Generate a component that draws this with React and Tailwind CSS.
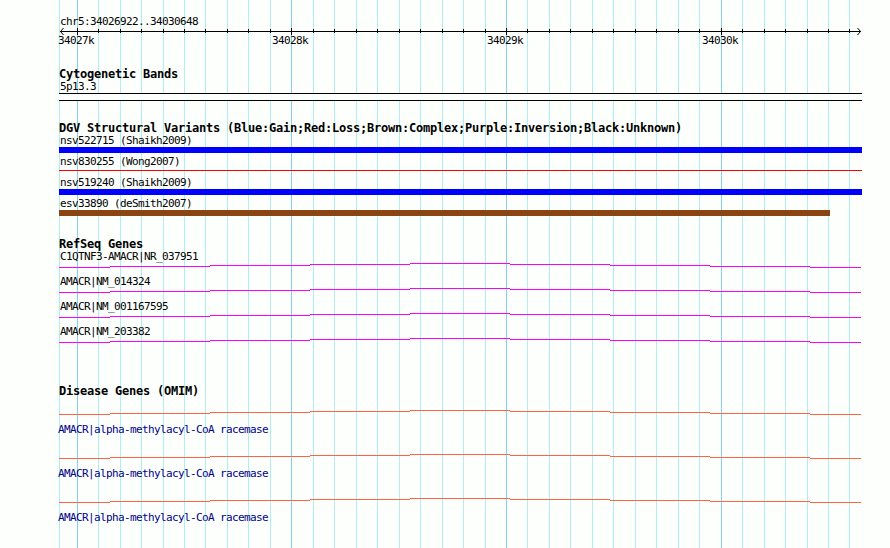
import React from 'react'
import clsx from 'clsx'

// x of every 100bp line inside the 803px wide track area
const GRID = Array.from({ length: 37 }, (_, i) => ({
  x: Math.floor(18.2 + i * 21.465),
  major: i % 10 === 0,
}))

const TICK_LABELS = ['34027k', '34028k', '34029k', '34030k']

const VARIANTS = [
  { name: 'nsv522715 (Shaikh2009)', bar: 'h-[6px] w-full bg-[#0000ff]' },
  { name: 'nsv830255 (Wong2007)', bar: 'h-px w-full mt-[2px] bg-[#ff0000]' },
  { name: 'nsv519240 (Shaikh2009)', bar: 'h-[6px] w-full bg-[#0000ff]' },
  { name: 'esv33890 (deSmith2007)', bar: 'h-[6px] w-[771px] bg-[#8b4513]' },
]

const REFSEQ = ['C1QTNF3-AMACR|NR_037951', 'AMACR|NM_014324', 'AMACR|NM_001167595', 'AMACR|NM_203382']

const OMIM = [1, 2, 3]

// intron hat: [start, width, y]
const HAT = [
  [0, 51, 4],
  [51, 100, 3],
  [151, 100, 2],
  [251, 100, 1],
  [351, 100, 0],
  [451, 100, 1],
  [551, 100, 2],
  [651, 100, 3],
  [751, 51, 4],
]

const Hat = ({ className }) => (
  <svg width="803" height="5" className={clsx('block', className)} shapeRendering="crispEdges">
    {HAT.map(([x, w, y]) => (
      <rect key={x} x={x} y={y} width={w} height="1" fill="currentColor" />
    ))}
  </svg>
)

const Title = ({ children }) => (
  <h2 className="h-3 text-[12px] leading-[13px] font-bold tracking-[-0.224px] whitespace-pre">{children}</h2>
)

const Label = ({ children, className = 'pl-px leading-[14px]' }) => (
  <div className={clsx('h-3 text-[11px] tracking-[-0.622px] whitespace-pre', className)}>{children}</div>
)

const Grid = () => (
  <svg width="803" height="548" className="absolute left-0 top-0" shapeRendering="crispEdges">
    <rect x="0" y="0" width="1" height="548" fill="#afeeee" />
    {GRID.map(({ x, major }) => (
      <rect key={x} x={x} y="0" width="1" height="548" fill={major ? '#87ceeb' : '#afeeee'} />
    ))}
  </svg>
)

const Ruler = () => (
  <svg width="803" height="41" className="block overflow-visible">
    <g shapeRendering="crispEdges">
      <rect x="1" y="4" width="801" height="1" />
      {GRID.map(({ x, major }) => (
        <rect key={x} x={x} y={major ? 1 : 2} width="1" height={major ? 7 : 4} />
      ))}
    </g>
    <path d="M4.5 1 L1.5 4.5 L4.5 8 M798.5 1 L801.5 4.5 L798.5 8" fill="none" stroke="#000" />
    {TICK_LABELS.map((t, i) => (
      <text key={t} x={GRID[i * 10].x - 19} y="17" className="text-[11px] tracking-[-0.622px]">
        {t}
      </text>
    ))}
  </svg>
)

export default function App() {
  return (
    <div className="w-[890px] h-[548px] overflow-hidden bg-[#fdfffc] pl-[59px] text-black font-['DejaVu_Sans_Mono',monospace]">
      <main className="relative w-[803px] h-full">
        <Grid />
        <div className="relative flex flex-col pt-[15px]">
          <Label>chr5:34026922..34030648</Label>
          <Ruler />

          <section className="mb-[21px]">
            <Title>Cytogenetic Bands</Title>
            <Label>5p13.3</Label>
            <div className="mt-px h-2 border-y border-black bg-[#fdfffc]" />
          </section>

          <section className="mb-5">
            <Title>DGV Structural Variants (Blue:Gain;Red:Loss;Brown:Complex;Purple:Inversion;Black:Unknown)</Title>
            {VARIANTS.map((v) => (
              <div key={v.name} className="flex h-[21px] flex-col gap-px">
                <Label>{v.name}</Label>
                <div className={v.bar} />
              </div>
            ))}
          </section>

          <section className="mb-[35px]">
            <Title>RefSeq Genes</Title>
            {REFSEQ.map((name) => (
              <div key={name} className="flex h-[25px] flex-col gap-px">
                <Label>{name}</Label>
                <Hat className="text-[#ff00ff]" />
              </div>
            ))}
          </section>

          <section>
            <Title>Disease Genes (OMIM)</Title>
            <div className="pt-[13px]">
              {OMIM.map((id) => (
                <div key={id} className="flex h-11 flex-col gap-[9px]">
                  <Hat className="text-[#ff6347]" />
                  <Label className="-ml-px leading-3 text-[#00008b]">AMACR|alpha-methylacyl-CoA racemase</Label>
                </div>
              ))}
            </div>
          </section>
        </div>
      </main>
    </div>
  )
}
